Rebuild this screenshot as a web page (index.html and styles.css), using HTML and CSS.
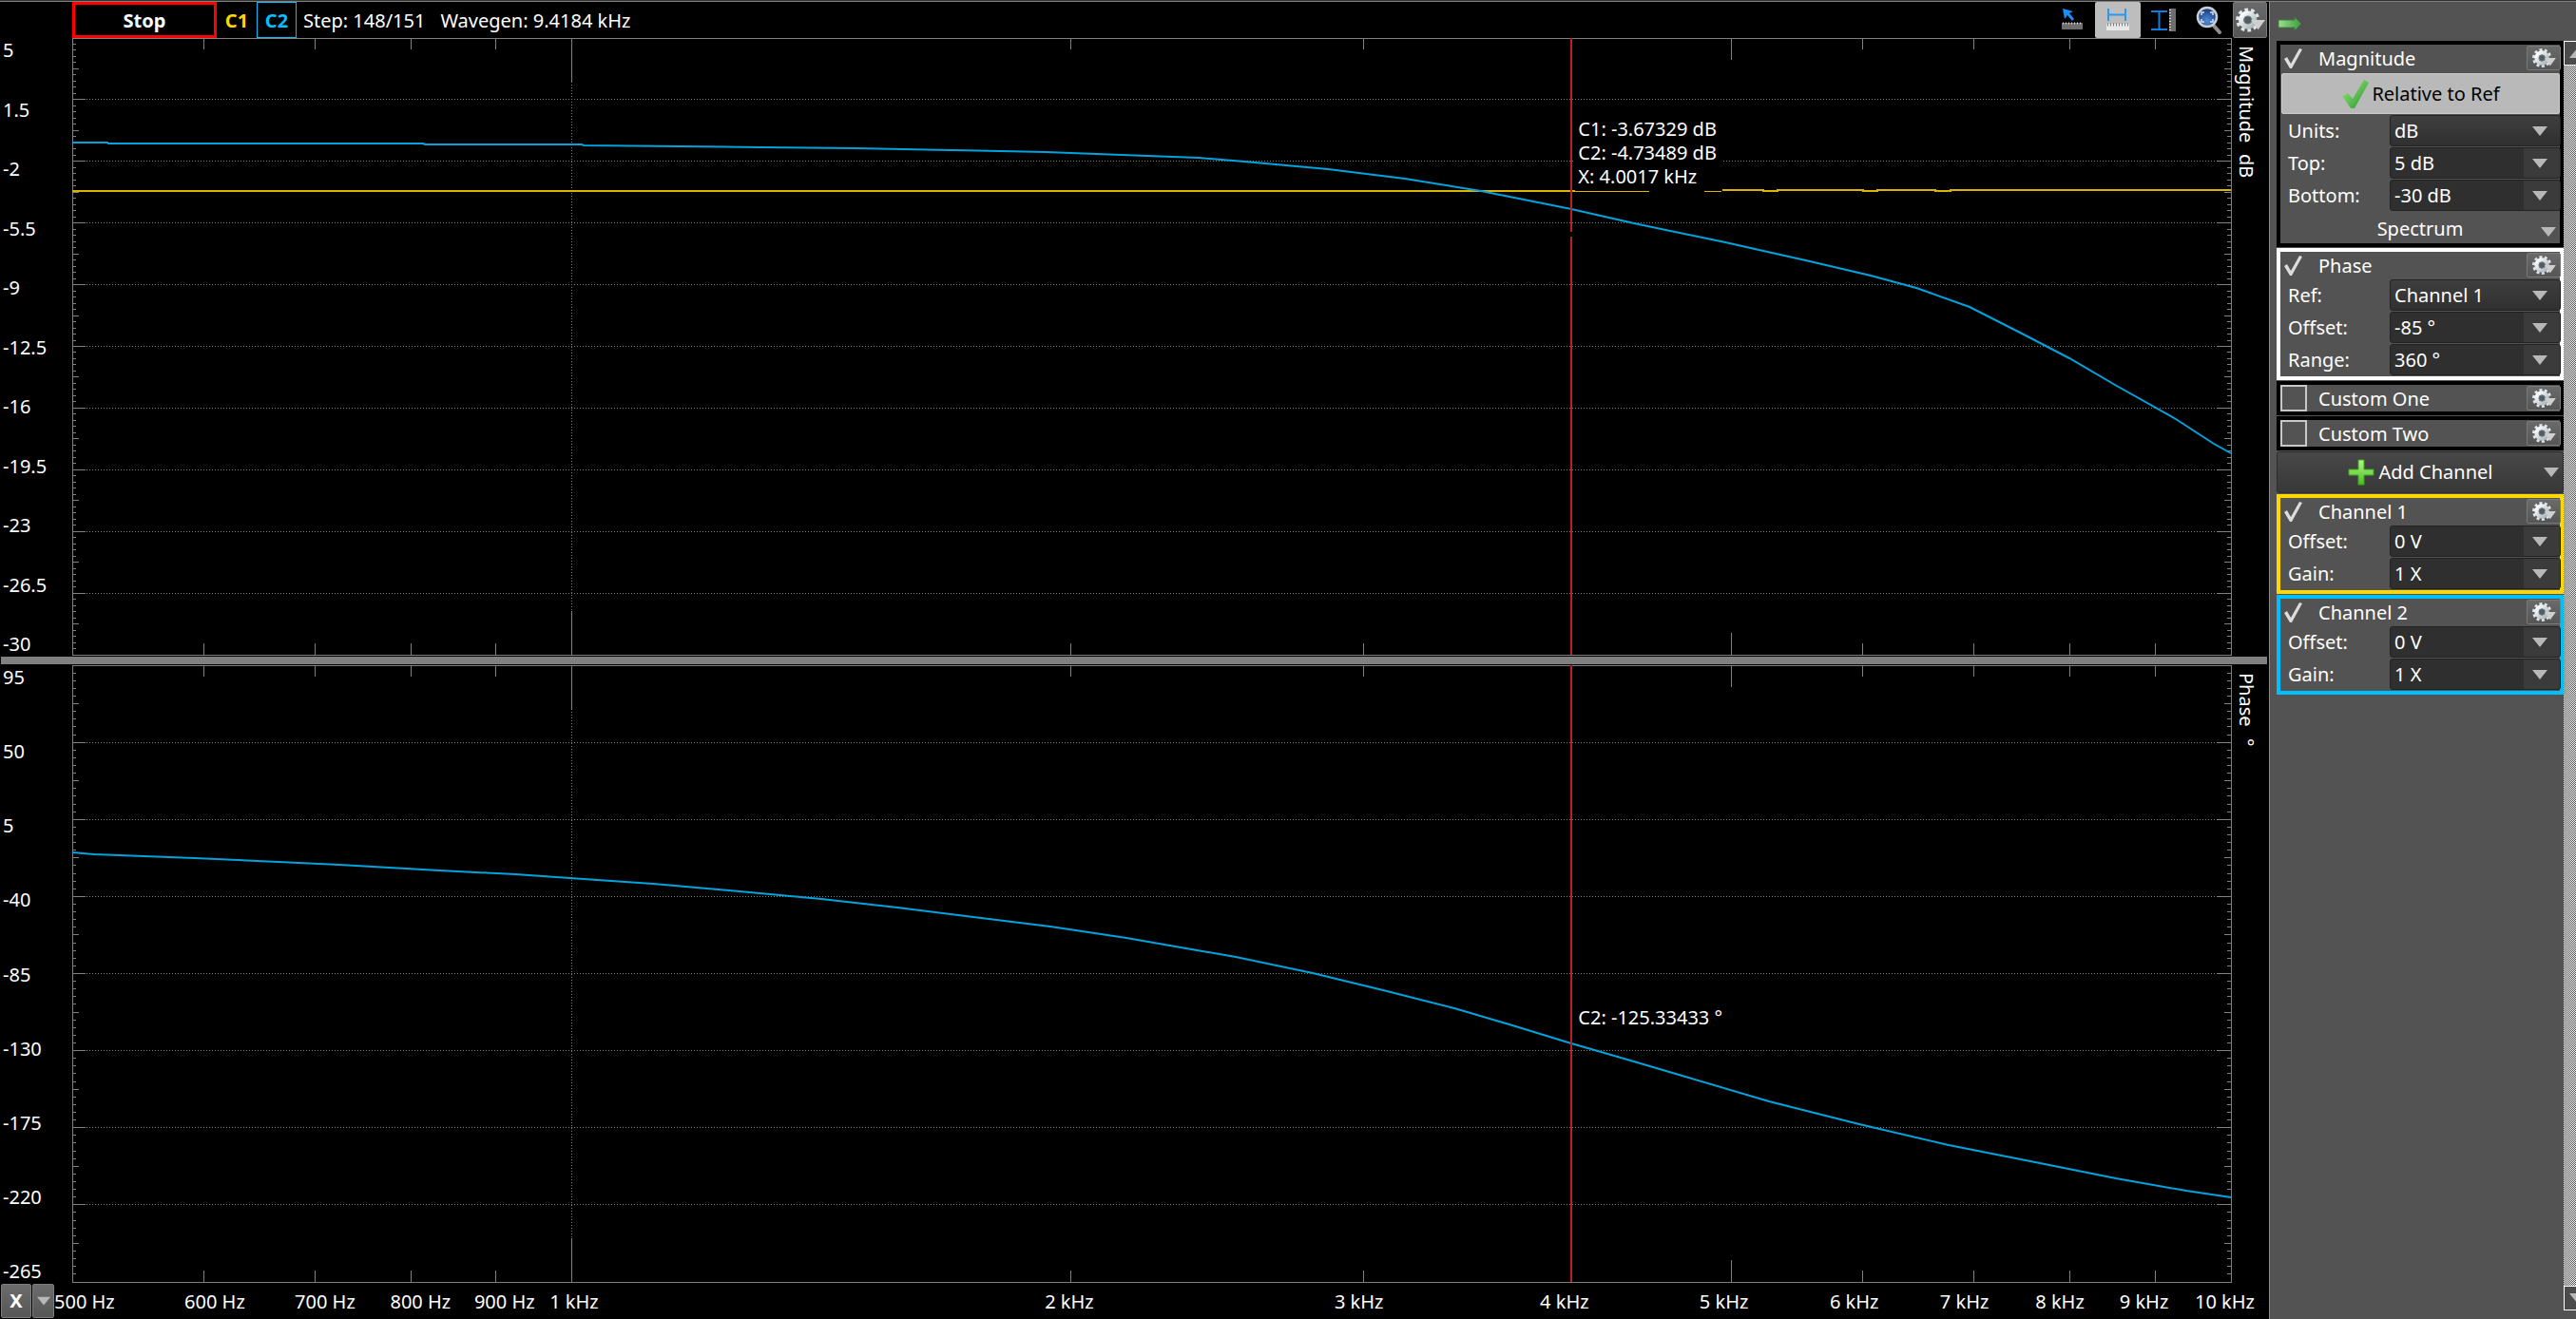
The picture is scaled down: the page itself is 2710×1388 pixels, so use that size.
FILE: index.html
```html
<!DOCTYPE html>
<html lang="en">
<head>
<meta charset="utf-8">
<title>Network Analyzer</title>
<link rel="stylesheet" href="styles.css">
</head>
<body>
<svg class="defs" aria-hidden="true">
  <defs>
    <linearGradient id="silver" x1="0" y1="0" x2="1" y2="1">
      <stop offset="0" stop-color="#ffffff"/><stop offset="1" stop-color="#a9b4ba"/>
    </linearGradient>
    <linearGradient id="green" x1="0" y1="0" x2="1" y2="1">
      <stop offset="0" stop-color="#a4f07c"/><stop offset="1" stop-color="#1f8f2c"/>
    </linearGradient>
    <linearGradient id="arrow" x1="0" y1="0" x2="1" y2="0">
      <stop offset="0" stop-color="#9be08a"/><stop offset="1" stop-color="#3f9a3f"/>
    </linearGradient>
    <linearGradient id="plus" x1="0" y1="0" x2="0" y2="1">
      <stop offset="0" stop-color="#b4f58c"/><stop offset="1" stop-color="#45bf1c"/>
    </linearGradient>
    <radialGradient id="lens" cx="0.5" cy="0.7" r="0.7">
      <stop offset="0" stop-color="#4f8fd8"/><stop offset="1" stop-color="#15326e"/>
    </radialGradient>
    <symbol id="gear" viewBox="0 0 28 24">
      <circle cx="12" cy="12" r="9" pathLength="20" fill="none" stroke="#dfe5e8" stroke-width="4" stroke-dasharray="1.1 0.9"/>
      <circle cx="12" cy="12" r="6" fill="none" stroke="url(#silver)" stroke-width="5"/>
      <circle cx="12" cy="12" r="3.5" fill="#525c61" stroke="#6f7d84" stroke-width="1"/>
      <path d="M15 12h13l-6.500 9z" fill="#cfcfcf"/>
    </symbol>
    <symbol id="down" viewBox="0 0 16 10"><path d="M0 0h16l-8 10z" fill="#b8b8b8"/></symbol>
    <symbol id="up" viewBox="0 0 16 10"><path d="M0 10h16l-8-10z" fill="#b8b8b8"/></symbol>
  </defs>
</svg>

<div class="app">
  <main class="scope">
    <header class="topbar">
      <button class="stop" type="button">Stop</button>
      <button class="chan chan-1" type="button">C1</button>
      <button class="chan chan-2" type="button">C2</button>
      <p class="status"><span>Step: 148/151</span><span>Wavegen: 9.4184 kHz</span></p>
      <div class="tools">
        <button class="tool" type="button" aria-label="Free cursor">
          <svg width="24" height="26" viewBox="0 0 24 26">
            <path d="M2 1l11 3-4 2 5 6-2 2-5-6-3 4z" fill="#1590ff"/>
            <path d="M1 16h22v7H1z" fill="#6e6e6e"/><path d="M2 16.500h20" stroke="#d8d8d8" stroke-width="2" stroke-dasharray="1 2"/>
          </svg>
        </button>
        <button class="tool tool-on" type="button" aria-label="Horizontal cursors">
          <svg width="26" height="26" viewBox="0 0 26 26">
            <path d="M3 1v13M21 1v13M3 7.500h18" stroke="#2a98f5" stroke-width="2" fill="none"/>
            <path d="M1 17h24v7H1z" fill="#e8e8e8"/><path d="M2 18h22" stroke="#777" stroke-width="3" stroke-dasharray="1 2"/>
          </svg>
        </button>
        <button class="tool" type="button" aria-label="Vertical cursors">
          <svg width="28" height="26" viewBox="0 0 28 26">
            <path d="M1 4h17M1 23h17M9.500 4v19" stroke="#0d80e8" stroke-width="2" fill="none"/>
            <path d="M20 1h7v24h-7z" fill="#6e6e6e"/><path d="M21 2v22" stroke="#d0d0d0" stroke-width="2" stroke-dasharray="1 2"/>
          </svg>
        </button>
        <button class="tool" type="button" aria-label="Zoom to fit">
          <svg width="30" height="30" viewBox="0 0 30 30">
            <path d="M19 20l7 8" stroke="#8d8d8d" stroke-width="4" stroke-linecap="round"/>
            <circle cx="13" cy="12" r="10" fill="url(#lens)" stroke="#c9ced3" stroke-width="2.500"/>
            <path d="M7 10V7h3M16 7h3v3M19 14v3h-3M10 17H7v-3" fill="none" stroke="#cfe2ff" stroke-width="1.500"/>
          </svg>
        </button>
        <button class="gear gear-tall" type="button" aria-label="Plot options"><svg width="32" height="28"><use href="#gear"/></svg></button>
      </div>
    </header>

    <section class="plot" aria-label="Magnitude">
      <ol class="scale"><li>5</li><li>1.5</li><li>-2</li><li>-5.5</li><li>-9</li><li>-12.5</li><li>-16</li><li>-19.5</li><li>-23</li><li>-26.5</li><li>-30</li></ol>
      <div class="canvas">
        <svg class="graph" data-plot="magnitude"></svg>
        <p class="readout readout-magnitude">C1: -3.67329 dB<br>C2: -4.73489 dB<br>X: 4.0017 kHz</p>
      </div>
      <h2 class="axis-name"><span>Magnitude</span><span>dB</span></h2>
    </section>

    <div class="splitter"></div>

    <section class="plot" aria-label="Phase">
      <ol class="scale"><li>95</li><li>50</li><li>5</li><li>-40</li><li>-85</li><li>-130</li><li>-175</li><li>-220</li><li>-265</li></ol>
      <div class="canvas">
        <svg class="graph" data-plot="phase"></svg>
        <p class="readout readout-phase">C2: -125.33433 °</p>
      </div>
      <h2 class="axis-name"><span>Phase</span><span>°</span></h2>
    </section>

    <footer class="xaxis">
      <button class="xbtn xbtn-name" type="button">X</button>
      <button class="xbtn xbtn-menu" type="button" aria-label="X axis menu"><svg width="14" height="10"><use href="#down"/></svg></button>
      <ol class="freqs"><li>500 Hz</li><li>600 Hz</li><li>700 Hz</li><li>800 Hz</li><li>900 Hz</li><li>1 kHz</li><li>2 kHz</li><li>3 kHz</li><li>4 kHz</li><li>5 kHz</li><li>6 kHz</li><li>7 kHz</li><li>8 kHz</li><li>9 kHz</li><li>10 kHz</li></ol>
    </footer>
  </main>

  <aside class="side">
    <div class="side-head">
      <button class="pin" type="button" aria-label="Hide panel">
        <svg width="26" height="16" viewBox="0 0 26 16"><path d="M1 4h17V1l7 7-7 7v-3H1z" fill="url(#arrow)" stroke="#3c7a42"/></svg>
      </button>
    </div>
    <div class="side-body">
      <div class="panels">
        <section class="panel">
          <div class="head"><label><input type="checkbox" checked><span>Magnitude</span></label><button class="gear" type="button" aria-label="Magnitude options"><svg width="28" height="22"><use href="#gear"/></svg></button></div>
          <button class="relative" type="button"><svg width="30" height="32" viewBox="0 0 30 32"><path d="M1 18l6-3 5 6L24 1l5 3-15 27H10z" fill="url(#green)"/></svg>Relative to Ref</button>
          <div class="row"><label for="units">Units:</label><span class="pick pick-list"><select id="units"><option>dB</option></select><svg width="16" height="10"><use href="#down"/></svg></span></div>
          <div class="row"><label for="top">Top:</label><span class="pick"><select id="top"><option>5 dB</option></select><svg width="16" height="10"><use href="#down"/></svg></span></div>
          <div class="row"><label for="bottom">Bottom:</label><span class="pick"><select id="bottom"><option>-30 dB</option></select><svg width="16" height="10"><use href="#down"/></svg></span></div>
          <button class="spectrum" type="button"><span>Spectrum</span><svg width="16" height="10"><use href="#down"/></svg></button>
        </section>

        <section class="panel panel-white">
          <div class="head"><label><input type="checkbox" checked><span>Phase</span></label><button class="gear" type="button" aria-label="Phase options"><svg width="28" height="22"><use href="#gear"/></svg></button></div>
          <div class="row"><label for="ref">Ref:</label><span class="pick pick-list"><select id="ref"><option>Channel 1</option></select><svg width="16" height="10"><use href="#down"/></svg></span></div>
          <div class="row"><label for="poffset">Offset:</label><span class="pick"><select id="poffset"><option>-85 °</option></select><svg width="16" height="10"><use href="#down"/></svg></span></div>
          <div class="row"><label for="range">Range:</label><span class="pick"><select id="range"><option>360 °</option></select><svg width="16" height="10"><use href="#down"/></svg></span></div>
        </section>

        <section class="panel">
          <div class="head"><label><input type="checkbox"><span>Custom One</span></label><button class="gear" type="button" aria-label="Custom One options"><svg width="28" height="22"><use href="#gear"/></svg></button></div>
        </section>
        <section class="panel">
          <div class="head"><label><input type="checkbox"><span>Custom Two</span></label><button class="gear" type="button" aria-label="Custom Two options"><svg width="28" height="22"><use href="#gear"/></svg></button></div>
        </section>

        <button class="add" type="button"><span><svg width="28" height="28" viewBox="0 0 28 28"><path d="M11 1h6v10h10v6H17v10h-6V17H1v-6h10z" fill="url(#plus)" stroke="#3fa31f"/></svg>Add Channel</span><svg width="16" height="10"><use href="#down"/></svg></button>

        <section class="panel panel-yellow">
          <div class="head"><label><input type="checkbox" checked><span>Channel 1</span></label><button class="gear" type="button" aria-label="Channel 1 options"><svg width="28" height="22"><use href="#gear"/></svg></button></div>
          <div class="row"><label for="offset1">Offset:</label><span class="pick"><select id="offset1"><option>0 V</option></select><svg width="16" height="10"><use href="#down"/></svg></span></div>
          <div class="row"><label for="gain1">Gain:</label><span class="pick"><select id="gain1"><option>1 X</option></select><svg width="16" height="10"><use href="#down"/></svg></span></div>
        </section>
        <section class="panel panel-blue">
          <div class="head"><label><input type="checkbox" checked><span>Channel 2</span></label><button class="gear" type="button" aria-label="Channel 2 options"><svg width="28" height="22"><use href="#gear"/></svg></button></div>
          <div class="row"><label for="offset2">Offset:</label><span class="pick"><select id="offset2"><option>0 V</option></select><svg width="16" height="10"><use href="#down"/></svg></span></div>
          <div class="row"><label for="gain2">Gain:</label><span class="pick"><select id="gain2"><option>1 X</option></select><svg width="16" height="10"><use href="#down"/></svg></span></div>
        </section>
      </div>
      <div class="scroll">
        <button type="button" aria-label="Scroll up"><svg width="16" height="10"><use href="#up"/></svg></button>
        <div class="track"></div>
        <button type="button" aria-label="Scroll down"><svg width="16" height="10"><use href="#down"/></svg></button>
      </div>
    </div>
  </aside>
</div>
<script src="plots.js"></script>
</body>
</html>
```
FILE: styles.css
```css
* { box-sizing: border-box; }

html { background: #333; }

body {
  margin: 0;
  padding-top: 1px;
  height: 100vh;
  font: 20px/24px "Noto Sans", "Open Sans", sans-serif;
  color: #fff;
}

button, select { font: inherit; color: inherit; margin: 0; padding: 0; }
button { border: 0; background: none; display: flex; align-items: center; justify-content: center; }
ol { list-style: none; margin: 0; padding: 0; }
p, h2 { margin: 0; }
svg { display: block; flex: none; }
.defs { position: absolute; width: 0; height: 0; }

.app {
  height: 100%;
  display: grid;
  grid-template-columns: minmax(0, 1fr) 323px;
  border-top: 1px solid #808080;
}

/* Plot area */
.scope {
  background: #000;
  display: grid;
  grid-template-rows: 38px minmax(0, 1fr) 10px minmax(0, 1fr) 38px;
  min-width: 0;
}

.topbar { display: flex; padding-left: 76px; }
.stop { width: 152px; padding-top: 2px; border: 3px solid #f00; font-weight: bold; }
.chan { width: 42px; padding-top: 2px; font-weight: bold; }
.chan-1 { color: #ffd700; }
.chan-2 { color: #00bfff; border: 1px solid #00bfff; }
.status { flex: 1; display: flex; gap: 16px; align-items: center; padding: 2px 0 0 7px; white-space: nowrap; }
.tools { display: flex; padding-right: 2px; }
.tool { width: 48px; border-radius: 2px; }
.tool-on { background: #bdbdbd; }

.gear {
  width: 36px;
  height: 26px;
  border: 1px solid #7a7a7a;
  border-radius: 2px;
  background: linear-gradient(#6a6a6a, #555);
}
.gear-tall { height: 38px; margin-left: 1px; }

.plot { display: grid; grid-template-columns: 76px minmax(0, 1fr) 39px; min-height: 0; }
.scale { display: flex; flex-direction: column; justify-content: space-between; padding: 1px 0 0 3px; }
.canvas { position: relative; min-height: 0; }
.graph { width: 100%; height: 100%; }
.readout { position: absolute; left: 69.6%; padding: 0 6px 3px 3px; line-height: 25px; background: #000; white-space: nowrap; }
.readout-magnitude { top: 12.8%; }
.readout-phase { top: 55%; }
.axis-name {
  writing-mode: vertical-rl;
  display: flex;
  gap: 12px;
  padding: 8px 12px 0 0;
  font: inherit;
}
.splitter { margin: 1px 2px 1px 1px; background: #808080; }

.xaxis { display: flex; padding: 1px 0 1px 1px; gap: 1px; }
.xbtn { border: 1px solid #7c7c7c; border-radius: 2px; background: linear-gradient(#6c6c6c, #565656); }
.xbtn-name { width: 32px; font-weight: bold; }
.xbtn-menu { width: 23px; }
.freqs {
  flex: 1;
  display: grid;
  align-items: center;
  padding: 2px 78px 0 0;
  margin-left: -1px;
  white-space: nowrap;
  grid-template-columns: 609fr 515fr 446fr 393fr 352fr 2314fr 1354fr 960fr 745fr 609fr 515fr 446fr 393fr 352fr 0;
}
.freqs li { width: 0; }

/* Side panel */
.side { background: #535353; border-left: 1px solid #8a8a8a; display: flex; flex-direction: column; min-height: 0; }
.side-head { height: 41px; padding: 15px 0 0 8px; }
.side-body { flex: 1; display: grid; grid-template-columns: 302px 13px; padding-left: 7px; min-height: 0; }
.panels { display: flex; flex-direction: column; gap: 1px; }
.panel { border: 4px solid #000; padding-bottom: 1px; }
.panel:not(:has(.row)) { padding-bottom: 0; }
.panel-white { border-color: #fff; }
.panel-yellow { border-color: #ffd700; }
.panel-blue { border-color: #00bfff; }

.head { display: flex; justify-content: space-between; align-items: center; height: 28px; }
.head label { display: flex; align-items: center; gap: 12px; }
.head label span { padding-top: 2px; }
.head .gear { margin-right: -1px; }
input[type="checkbox"] { appearance: none; margin: 0; width: 28px; height: 28px; border: 2px solid #c8c8c8; }
input[type="checkbox"]:checked { border: 0; }
input[type="checkbox"]:checked::before {
  content: "";
  display: block;
  height: 28px;
  background: #dcdcdc;
  clip-path: polygon(4px 15px, 7px 13px, 11px 20px, 20px 4px, 23px 5px, 12px 25px, 10px 25px);
}

.relative {
  width: 293px;
  height: 43px;
  margin: 2px 0 0 1px;
  gap: 2px;
  border: 1px solid #cacaca;
  border-radius: 2px;
  background: #b9b9b9;
  color: #000;
}
.row { display: grid; grid-template-columns: 115px 180px; height: 34px; padding-top: 1px; align-items: center; }
.row label { padding-left: 8px; }
.pick { display: grid; grid-template-columns: 1fr 44px; align-items: center; justify-items: center; }
.pick select {
  grid-area: 1 / 1 / 2 / 3;
  width: 100%;
  height: 33px;
  padding: 0 44px 0 4px;
  appearance: none;
  border: 1px solid #222;
  border-radius: 3px;
  background: linear-gradient(90deg, #2f2f2f 140px, #3b3b3b 140px);
}
.pick-list select { background: linear-gradient(#3e3e3e, #303030); }
.pick svg { grid-area: 1 / 2; pointer-events: none; }

.spectrum { width: 294px; height: 33px; display: grid; grid-template-columns: 1fr 16px; padding: 4px 4px 0 20px; }
.spectrum svg { margin-top: 6px; }
.add {
  height: 44px;
  display: grid;
  grid-template-columns: 1fr 16px;
  padding: 0 4px 0 20px;
  border: 1px solid #2c2c2c;
  border-radius: 3px;
  background: linear-gradient(#484848, #383838);
}
.add span { display: flex; gap: 5px; align-items: center; justify-content: center; }

.scroll { display: flex; flex-direction: column; padding-bottom: 9px; overflow: hidden; }
.scroll button { width: 28px; height: 26px; border: 1px solid #fff; background: #4b4b4b; }
.track { flex: 1; background: repeating-conic-gradient(#fff 0 25%, #535353 0 50%) 0 0 / 2px 2px; }
```
FILE: plots.js
```js
// Traces are stored on a 2271 x 649 grid and scaled to the size of the plot.
const GRID_W = 2271;
const GRID_H = 649;

const plots = {
  magnitude: {
    divisions: 10,
    cursorGap: [204, 209],
    traces: [
      { color: "#d9b400", points: [[0, 161], [1658, 161], [1658, 160], [1718, 160], [1718, 161], [1734, 161], [1734, 160], [1779, 160], [1779, 161], [1794, 161], [1794, 160], [1884, 160], [1884, 161], [1899, 161], [1899, 160], [1960, 160], [1960, 161], [1976, 161], [1976, 160], [2271, 160]] },
      { color: "#00a3dd", points: [[0, 110], [37, 110], [38, 111], [369, 111], [371, 112], [536, 112], [538, 113], [724, 115], [824, 116], [924, 118], [1024, 120], [1104, 123], [1185, 126], [1233, 130], [1321, 138], [1402, 148], [1482, 161], [1577, 180], [1643, 195], [1739, 215], [1828, 235], [1892, 250], [1940, 263], [1996, 283], [2053, 312], [2101, 337], [2149, 365], [2213, 401], [2253, 427], [2271, 437]] }
    ]
  },
  phase: {
    divisions: 8,
    traces: [
      { color: "#00a3dd", points: [[0, 197], [23, 199], [129, 203], [217, 207], [281, 210], [386, 216], [466, 220], [538, 225], [611, 230], [691, 237], [788, 246], [868, 255], [948, 265], [1029, 275], [1109, 287], [1189, 301], [1224, 307], [1305, 324], [1379, 342], [1454, 361], [1515, 379], [1577, 398], [1636, 415], [1697, 433], [1785, 459], [1880, 483], [1974, 505], [2055, 521], [2150, 540], [2224, 553], [2271, 560]] }
    ]
  }
};

const frequencies = [600, 700, 800, 900, 1000, 2000, 3000, 4000, 5000, 6000, 7000, 8000, 9000];
const CURSOR_HZ = 4003;
const xOf = (hz, w) => Math.floor(Math.log(hz / 500) / Math.log(20) * w);

function path(d, stroke, width, dash) {
  const el = document.createElementNS("http://www.w3.org/2000/svg", "path");
  el.setAttribute("d", d);
  el.setAttribute("fill", "none");
  el.setAttribute("stroke", stroke);
  el.setAttribute("stroke-width", width);
  el.setAttribute("shape-rendering", width === 1 ? "crispEdges" : "auto");
  if (dash) el.setAttribute("stroke-dasharray", dash);
  return el;
}

function draw(svg) {
  const plot = plots[svg.dataset.plot];
  const w = svg.clientWidth - 1;
  const h = svg.clientHeight - 1;
  let ticks = `M.5 .5H${w + 0.5}V${h + 0.5}H.5Z`;
  let dots = "";

  const steps = plot.divisions * 10;
  for (let i = 1; i < steps; i++) {
    const y = Math.floor(i * h / steps) + 0.5;
    const len = i % 10 === 0 ? 14 : i % 5 === 0 ? 7 : 4;
    ticks += `M0 ${y}h${len}M${w} ${y}h${-len}`;
    if (len === 14) dots += `M15 ${y}H${w - 14}`;
  }
  for (const hz of frequencies) {
    const x = xOf(hz, w) + 0.5;
    const len = hz === 1000 ? 46 : hz === 5000 ? 23 : 12;
    ticks += `M${x} 0v${len}M${x} ${h}v${-len}`;
    if (hz === 1000) dots += `M${x} ${len}V${h - len}`;
  }

  const cx = xOf(CURSOR_HZ, w) + 1;
  const gap = (plot.cursorGap || []).map(y => y * h / GRID_H);
  const cursor = gap.length ? `M${cx} 0V${gap[0]}M${cx} ${gap[1]}V${h}` : `M${cx} 0V${h}`;

  svg.replaceChildren(path(dots, "#808080", 1, "1 2"), path(ticks, "#808080", 1));
  for (const trace of plot.traces) {
    const d = "M" + trace.points.map(([x, y]) => `${x * w / GRID_W} ${y * h / GRID_H}`).join("L");
    svg.append(path(d, trace.color, 2));
  }
  svg.append(path(cursor, "#b5202a", 2));
}

function drawAll() {
  document.querySelectorAll(".graph").forEach(draw);
}

drawAll();
window.addEventListener("resize", drawAll);
```
